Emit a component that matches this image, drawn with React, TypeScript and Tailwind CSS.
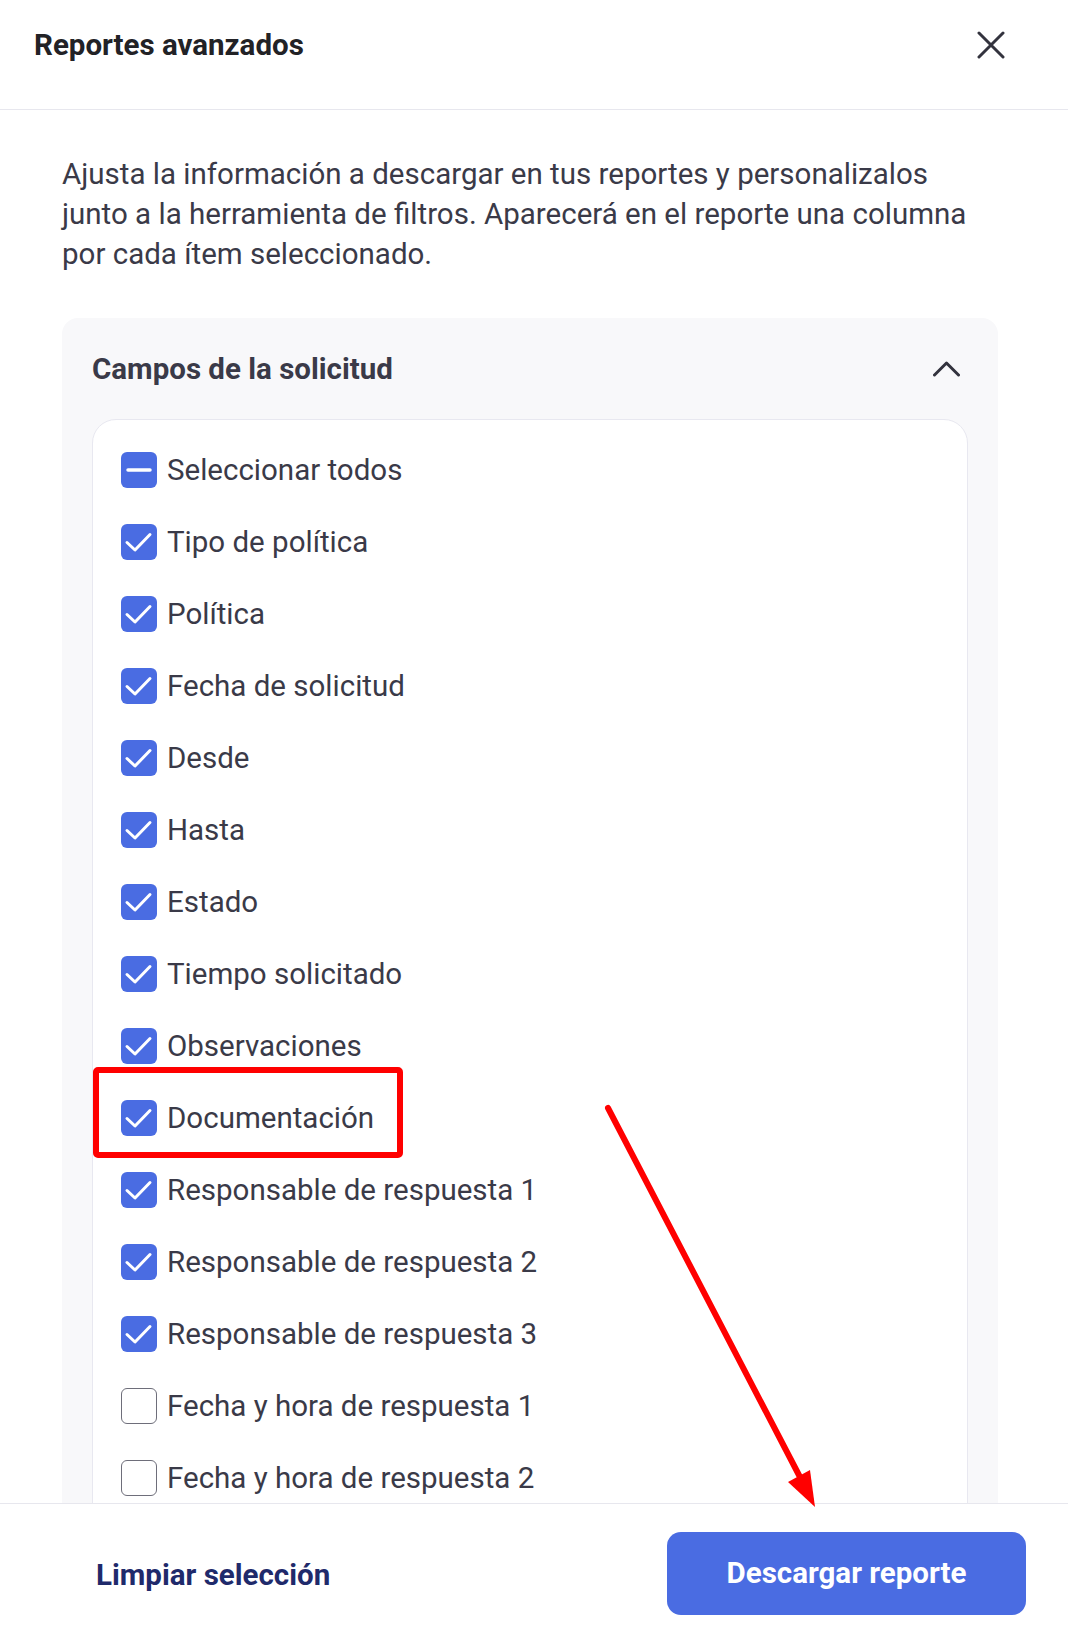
import React from "react";

const items: { label: string; checked: boolean }[] = [
  { label: "Tipo de política", checked: true },
  { label: "Política", checked: true },
  { label: "Fecha de solicitud", checked: true },
  { label: "Desde", checked: true },
  { label: "Hasta", checked: true },
  { label: "Estado", checked: true },
  { label: "Tiempo solicitado", checked: true },
  { label: "Observaciones", checked: true },
  { label: "Documentación", checked: true },
  { label: "Responsable de respuesta 1", checked: true },
  { label: "Responsable de respuesta 2", checked: true },
  { label: "Responsable de respuesta 3", checked: true },
  { label: "Fecha y hora de respuesta 1", checked: false },
  { label: "Fecha y hora de respuesta 2", checked: false },
];

function Box({ state }: { state: "checked" | "mixed" | "empty" }) {
  if (state === "empty") {
    return (
      <span className="w-[36px] h-[36px] shrink-0 rounded-[6px] border-[1.5px] border-[#6e6e7a] bg-white" />
    );
  }
  return (
    <span className="w-[36px] h-[36px] shrink-0 rounded-[6px] bg-[#4a6ce2] flex items-center justify-center">
      <svg width="36" height="36" viewBox="0 0 36 36" fill="none">
        {state === "checked" ? (
          <path d="M6 18.5 L14 26 L29 10.5" stroke="white" strokeWidth="3" strokeLinecap="round" strokeLinejoin="round" />
        ) : (
          <path d="M7 18 L29 18" stroke="white" strokeWidth="3.5" strokeLinecap="round" />
        )}
      </svg>
    </span>
  );
}

export default function App() {
  return (
    <div className="relative w-[1068px] h-[1642px] bg-white flex flex-col overflow-hidden font-['Roboto',sans-serif]">
      <header className="h-[110px] shrink-0 border-b border-[#e7e7ee] flex items-start justify-between pl-[34px] pr-[63px] pt-[25px]">
        <h1 className="text-[29.5px] leading-[40px] font-bold text-[#222226]">Reportes avanzados</h1>
        <button className="mt-[6px] w-[28px] h-[28px] flex items-center justify-center">
          <svg width="28" height="28" viewBox="0 0 28 28" fill="none">
            <path d="M2 2 L26 26 M26 2 L2 26" stroke="#33333e" strokeWidth="3" strokeLinecap="round" />
          </svg>
        </button>
      </header>

      <main className="flex-1 overflow-hidden pl-[62px] pr-[70px] pt-[44px]">
        <p className="text-[29.5px] leading-[40px] text-[#3a3a48]">
          Ajusta la información a descargar en tus reportes y personalizalos junto a la herramienta de filtros. Aparecerá en el reporte una columna por cada ítem seleccionado.
        </p>

        <section className="mt-[44px] bg-[#f8f8fa] rounded-[16px] px-[30px] pt-[31px] pb-[30px]">
          <div className="flex items-center justify-between pr-[8px]">
            <h2 className="text-[29.5px] leading-[40px] font-bold text-[#3a3a48]">Campos de la solicitud</h2>
            <svg width="27" height="16" viewBox="0 0 27 16" fill="none">
              <path d="M1.5 14 L13.5 2 L25.5 14" stroke="#33333e" strokeWidth="3" strokeLinecap="round" strokeLinejoin="round" />
            </svg>
          </div>

          <div className="mt-[30px] bg-white border border-[#e8e8f0] rounded-[24px] pl-[28px] pt-[32px] pb-[40px] flex flex-col gap-[36px]">
            <label className="flex items-center gap-[10px] h-[36px]">
              <Box state="mixed" />
              <span className="text-[29.5px] leading-[40px] text-[#3a3a48]">Seleccionar todos</span>
            </label>
            {items.map((it) => (
              <label key={it.label} className="flex items-center gap-[10px] h-[36px]">
                <Box state={it.checked ? "checked" : "empty"} />
                <span className="text-[29.5px] leading-[40px] text-[#3a3a48]">{it.label}</span>
              </label>
            ))}
          </div>
        </section>
      </main>

      <footer className="h-[139px] shrink-0 border-t border-[#e7e7ee] bg-white flex items-center justify-between pl-[96px] pr-[42px]">
        <button className="text-[29.5px] leading-[40px] font-bold text-[#1f2a6b] mt-[4px]">Limpiar selección</button>
        <button className="w-[359px] h-[83px] rounded-[14px] bg-[#4a6ce2] text-white text-[29.5px] font-bold">
          Descargar reporte
        </button>
      </footer>

      <svg className="absolute inset-0 pointer-events-none" width="1068" height="1642" viewBox="0 0 1068 1642" fill="none">
        <rect x="96" y="1070" width="304" height="85" rx="2" stroke="#ff0000" strokeWidth="6" />
        <line x1="608" y1="1108" x2="801" y2="1479" stroke="#ff0000" strokeWidth="6" strokeLinecap="round" />
        <polygon points="788,1482 810,1470 815,1507" fill="#ff0000" />
      </svg>
    </div>
  );
}
